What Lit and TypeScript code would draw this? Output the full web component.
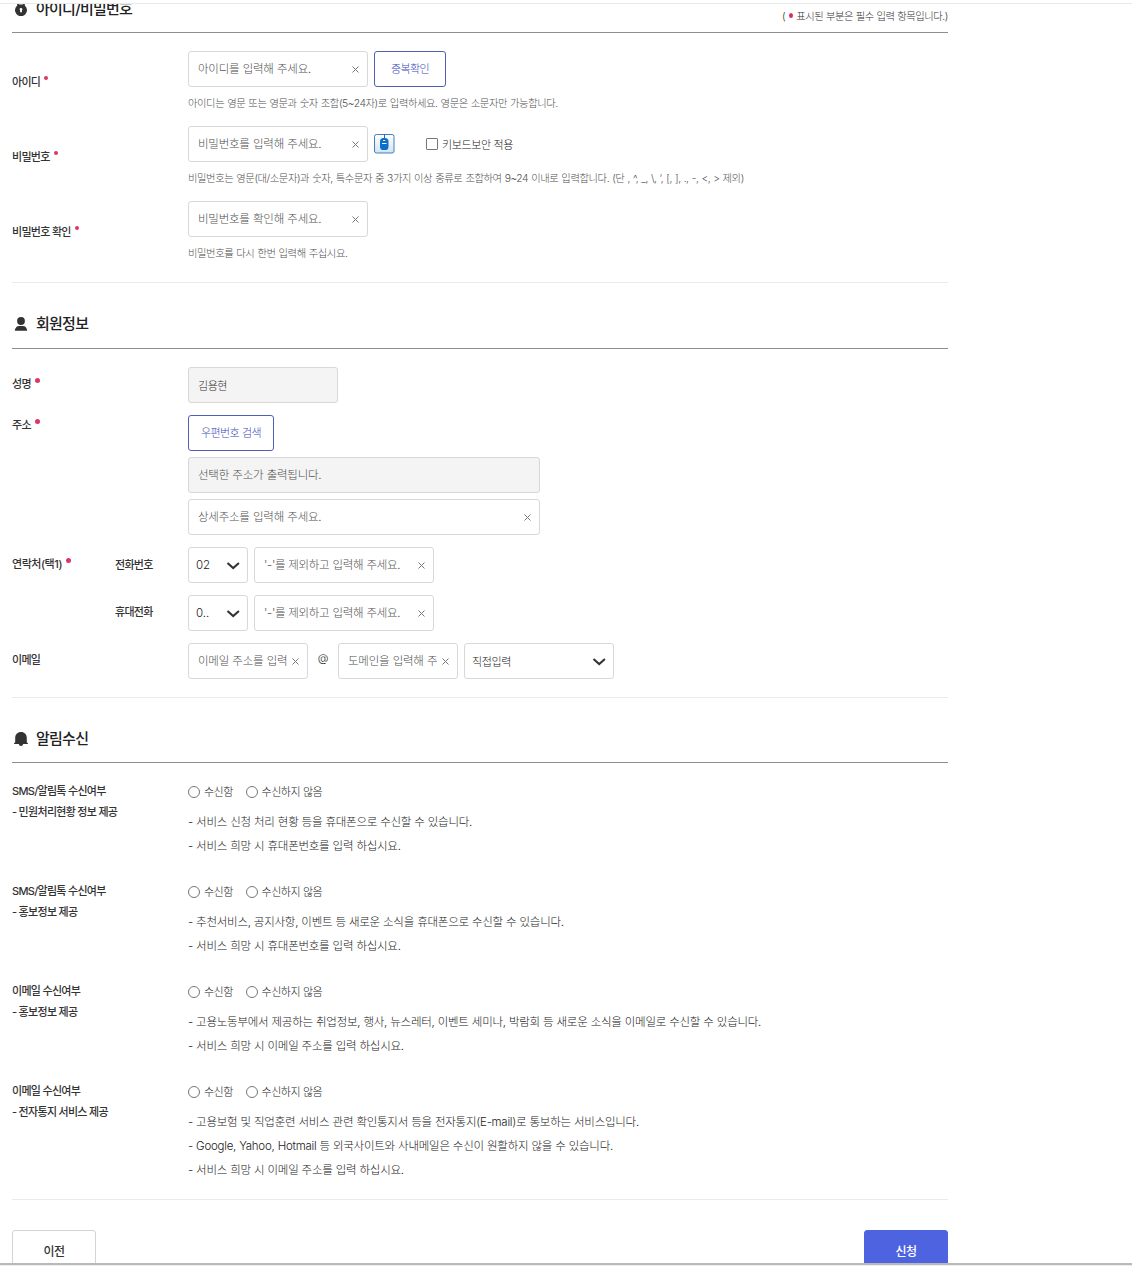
import { LitElement, html, css, svg } from "lit";
import { customElement } from "lit/decorators.js";

const lockIcon = svg`<path fill="#333" fill-rule="evenodd" d="M3.200 3.600V0h1.900v2.600h3.800V0h1.900v3.600A6 6 0 1 1 3.200 3.600ZM7 5.900a1.300 1.300 0 0 0-.9 2.300v2h1.800v-2A1.300 1.300 0 0 0 7 5.900Z"/>`;
const userIcon = svg`<circle cx="7" cy="4" r="3.900" fill="#333"/><path fill="#333" d="M.8 13.800c.3-3 2-4.900 4.200-4.900h4c2.200 0 3.900 1.900 4.200 4.900Z"/>`;
const bellIcon = svg`<path fill="#333" d="M7 0c3.500 0 5.800 2.600 5.800 5.800v4.400L14 11.400v.6H9.200A2.200 2.200 0 0 1 7 14a2.200 2.200 0 0 1-2.200-2H0v-.6l1.200-1.200V5.800C1.200 2.600 3.500 0 7 0Z"/>`;

const consents = [
  {
    title: ["SMS/알림톡 수신여부", "- 민원처리현황 정보 제공"],
    lines: ["- 서비스 신청 처리 현황 등을 휴대폰으로 수신할 수 있습니다.", "- 서비스 희망 시 휴대폰번호를 입력 하십시요."],
  },
  {
    title: ["SMS/알림톡 수신여부", "- 홍보정보 제공"],
    lines: ["- 추천서비스, 공지사항, 이벤트 등 새로운 소식을 휴대폰으로 수신할 수 있습니다.", "- 서비스 희망 시 휴대폰번호를 입력 하십시요."],
  },
  {
    title: ["이메일 수신여부", "- 홍보정보 제공"],
    lines: ["- 고용노동부에서 제공하는 취업정보, 행사, 뉴스레터, 이벤트 세미나, 박람회 등 새로운 소식을 이메일로 수신할 수 있습니다.", "- 서비스 희망 시 이메일 주소를 입력 하십시요."],
  },
  {
    title: ["이메일 수신여부", "- 전자통지 서비스 제공"],
    lines: ["- 고용보험 및 직업훈련 서비스 관련 확인통지서 등을 전자통지(E-mail)로 통보하는 서비스입니다.", "- Google, Yahoo, Hotmail 등 외국사이트와 사내메일은 수신이 원활하지 않을 수 있습니다.", "- 서비스 희망 시 이메일 주소를 입력 하십시요."],
  },
];

@customElement("app-root")
export class AppRoot extends LitElement {
  static styles = css`
    :host { display: block; }
    * { box-sizing: border-box; }
    .frame {
      display: flex; flex-direction: column; height: 1266px; width: 1132px; overflow: hidden; background: #fff;
      font-family: Inter, "Noto Sans CJK KR", sans-serif; font-size: 11.5px; font-weight: 300; color: #333;
      letter-spacing: -0.25px; word-spacing: 0.15px; border-top: 3px solid #fff;
    }
    .view { flex: 1; min-height: 0; overflow: hidden; border-top: 1px solid #e9e9e9; padding-left: 12px; }
    .edge { height: 3px; background: #b9b9b9; border-bottom: 1px solid #eee; flex: none; }
    .page { width: 936px; }
    .head { display: flex; align-items: center; height: 48px; border-bottom: 1px solid #8e8e8e; padding-left: 2px; gap: 8px; }
    .first { margin-top: -19px; }
    .second { margin-top: 18px; padding-bottom: 2px; }
    .third { margin-top: 17px; }
    .head svg { width: 14px; height: 14px; flex: none; }
    .title { font-size: 15px; line-height: 22px; font-weight: 500; color: #222; flex: 1; letter-spacing: -0.75px; }
    .note { font-size: 10.3px; letter-spacing: -0.43px; color: #333; display: flex; align-items: center; padding-top: 14px; white-space: pre; }
    .note i { width: 4px; height: 5px; border-radius: 50%; background: #e02a5c; margin: 0 3px 1px 4px; }
    .body { display: flex; flex-direction: column; gap: 12px; padding: 18px 0; border-bottom: 1px solid #eaeaea; }
    .ids { gap: 13px; padding-bottom: 19px; }
    .row { display: grid; grid-template-columns: 103px 73px 1fr; align-items: center; }
    .wide { grid-template-columns: 176px 1fr; }
    .top { align-items: start; }
    .label { display: flex; align-items: center; line-height: 20px; font-weight: 500; font-size: 11px; color: #333; letter-spacing: -0.7px; word-spacing: 0; }
    .up { padding-bottom: 2px; }
    .contact { letter-spacing: -0.45px; }
    .dot { width: 5px; height: 5px; border-radius: 50%; background: #dc3863; margin: 0 0 8px 4px; }
    .ids .dot { width: 4px; height: 4px; }
    .line { display: flex; align-items: center; gap: 6px; }
    .stack { display: flex; flex-direction: column; gap: 6px; align-items: flex-start; }
    .help { line-height: 20px; font-size: 10.3px; letter-spacing: -0.42px; word-spacing: 0.55px; color: #505050; margin-top: 6px; white-space: nowrap; }
    .field { display: flex; align-items: center; width: 180px; height: 36px; border: 1px solid #d8d8d8; border-radius: 3px; padding: 0 7px 0 9px; background: #fff; }
    .field input { flex: 1; min-width: 0; width: 0; border: 0; outline: 0; padding: 0; background: none; font: inherit; letter-spacing: inherit; word-spacing: 0.35px; color: #333; }
    .field input::placeholder { color: #505050; opacity: 1; }
    .phone input { letter-spacing: -0.34px; }
    .off { background: #f4f4f4; }
    .value { font-size: 11px; letter-spacing: -0.45px; padding-bottom: 1px; }
    .w150 { width: 150px; }
    .w120 { width: 120px; }
    .w352 { width: 352px; }
    .clear { width: 9px; height: 9px; flex: none; }
    .btn { font: inherit; font-size: 11px; letter-spacing: -0.6px; word-spacing: 0.35px; height: 36px; border: 1px solid #4d60b5; border-radius: 3px; background: #fff; color: #3c4abc; width: 72px; padding: 0 0 2px; }
    .zip { width: 86px; }
    .select { display: flex; align-items: center; justify-content: space-between; flex: none; width: 60px; height: 36px; border: 1px solid #d8d8d8; border-radius: 3px; padding: 0 7px; color: #222; font-size: 11px; letter-spacing: -0.4px; }
    .select.num { letter-spacing: 0; font-size: 11.5px; }
    .select.w150 { width: 150px; }
    .select svg { width: 14px; height: 9px; }
    .check { display: flex; align-items: center; gap: 4px; margin-left: 25px; color: #222; font-size: 11px; letter-spacing: -0.4px; word-spacing: 0.2px; }
    .check span { padding-bottom: 1px; }
    .check input { appearance: none; margin: 0; width: 12px; height: 12px; border: 1px solid #777; border-radius: 1px; }
    .mouse { width: 21px; height: 20px; }
    .at { width: 18px; text-align: center; color: #222; padding-bottom: 6px; font-size: 11px; }
    .consents { gap: 23px; padding-bottom: 17px; }
    .consent { display: grid; grid-template-columns: 176px 1fr; align-items: start; }
    .names { font-weight: 500; color: #333; line-height: 21px; font-size: 11px; letter-spacing: -0.7px; word-spacing: 0; }
    .radios { display: flex; gap: 13px; height: 20px; color: #222; }
    .radio { display: flex; align-items: center; gap: 4px; font-size: 11px; letter-spacing: -0.5px; word-spacing: 0.35px; }
    .radio input { appearance: none; margin: 2px 0 0; width: 12px; height: 12px; border: 1px solid #777; border-radius: 50%; }
    .radio + .radio { margin-left: -0.3px; }
    .desc { margin-top: 9px; line-height: 24px; color: #222; white-space: nowrap; }
    .actions { display: flex; justify-content: space-between; padding-top: 30px; }
    .action { font: inherit; font-size: 12px; font-weight: 500; letter-spacing: -0.66px; width: 84px; height: 40px; border: 1px solid #d4d4d4; border-radius: 3px; background: #fff; color: #333; padding: 0; }
    .action.primary { background: #4d63e0; border-color: #4d63e0; color: #fff; }
  `;

  private field(text: string, cls = "", clear = true, value = "") {
    return html`<div class="field ${cls}">
      <input type="text" placeholder=${text} .value=${value} ?readonly=${!clear} />
      ${clear ? html`<svg class="clear" viewBox="0 0 9 9"><path d="M1.500 1.500l6 6M7.500 1.500l-6 6" stroke="#777" fill="none"/></svg>` : ""}
    </div>`;
  }

  private select(text: string, cls = "") {
    return html`<div class="select ${cls}"><span>${text}</span>
      <svg viewBox="0 0 14 9"><path d="M1.500 2L7.200 7L12.900 2" fill="none" stroke="#333" stroke-width="2.100"/></svg></div>`;
  }

  private label(text: string, required = true, cls = "") {
    return html`<div class="label ${cls}"><span>${text}</span>${required ? html`<i class="dot"></i>` : ""}</div>`;
  }

  render() {
    return html`<div class="frame">
      <div class="view"><div class="page">
        <div class="head first"><svg viewBox="0 0 14 14">${lockIcon}</svg><span class="title">아이디/비밀번호</span>
          <span class="note">(<i></i>표시된 부분은 필수 입력 항목입니다.)</span></div>
        <div class="body ids">
          <div class="row wide">${this.label("아이디")}
            <div><div class="line">${this.field("아이디를 입력해 주세요.")}<button class="btn">중복확인</button></div>
            <div class="help">아이디는 영문 또는 영문과 숫자 조합(5~24자)로 입력하세요. 영문은 소문자만 가능합니다.</div></div></div>
          <div class="row wide">${this.label("비밀번호")}
            <div><div class="line">${this.field("비밀번호를 입력해 주세요.")}
              <svg class="mouse" viewBox="0 0 21 20"><defs><linearGradient id="g" x2="0" y2="1"><stop stop-color="#fff"/><stop offset="1" stop-color="#d5e3ee"/></linearGradient></defs><rect x=".5" y=".5" width="19.500" height="18.500" rx="2" fill="url(#g)" stroke="#4080b8"/><path d="M10.500 0v5" stroke="#1a6fc0"/><rect x="6" y="4" width="8.500" height="12" rx="3.600" fill="#0b6fcb"/><path d="M8 9.500h4.500M9.200 6.500h2" stroke="#fff"/></svg>
              <label class="check"><input type="checkbox" /><span>키보드보안 적용</span></label></div>
            <div class="help">비밀번호는 영문(대/소문자)과 숫자, 특수문자 중 3가지 이상 종류로 조합하여 9~24 이내로 입력합니다. (단 , ^, _, \\, ‘, [, ], ., -, <, > 제외)</div></div></div>
          <div class="row wide">${this.label("비밀번호 확인")}
            <div><div class="line">${this.field("비밀번호를 확인해 주세요.")}</div>
            <div class="help">비밀번호를 다시 한번 입력해 주십시요.</div></div></div>
        </div>

        <div class="head second"><svg viewBox="0 0 14 14">${userIcon}</svg><span class="title">회원정보</span></div>
        <div class="body">
          <div class="row wide">${this.label("성명", true, "up")}${this.field("", "off w150 value", false, "김용현")}</div>
          <div class="row wide top">${this.label("주소")}
            <div class="stack"><button class="btn zip">우편번호 검색</button>
              ${this.field("선택한 주소가 출력됩니다.", "off w352", false)}
              ${this.field("상세주소를 입력해 주세요.", "w352")}</div></div>
          <div class="row">${this.label("연락처(택1)", true, "up contact")}${this.label("전화번호", false)}
            <div class="line">${this.select("02", "num")}${this.field("'-'를 제외하고 입력해 주세요.", "phone")}</div></div>
          <div class="row"><span></span>${this.label("휴대전화", false, "up")}
            <div class="line">${this.select("0..", "num")}${this.field("'-'를 제외하고 입력해 주세요.", "phone")}</div></div>
          <div class="row wide">${this.label("이메일", false, "up")}
            <div class="line">${this.field("이메일 주소를 입력", "w120")}<span class="at">@</span>${this.field("도메인을 입력해 주", "w120")}${this.select("직접입력", "w150")}</div></div>
        </div>

        <div class="head third"><svg viewBox="0 0 14 14">${bellIcon}</svg><span class="title">알림수신</span></div>
        <div class="body consents">
          ${consents.map((c, i) => html`<div class="consent">
            <div class="names">${c.title.map((t) => html`<div>${t}</div>`)}</div>
            <div><div class="radios">
              <label class="radio"><input type="radio" name="c${i}" /><span>수신함</span></label>
              <label class="radio"><input type="radio" name="c${i}" /><span>수신하지 않음</span></label></div>
              <div class="desc">${c.lines.map((t) => html`<div>${t}</div>`)}</div></div>
          </div>`)}
        </div>
        <div class="actions"><button class="action">이전</button><button class="action primary">신청</button></div>
      </div></div>
      <div class="edge"></div>
    </div>`;
  }
}
